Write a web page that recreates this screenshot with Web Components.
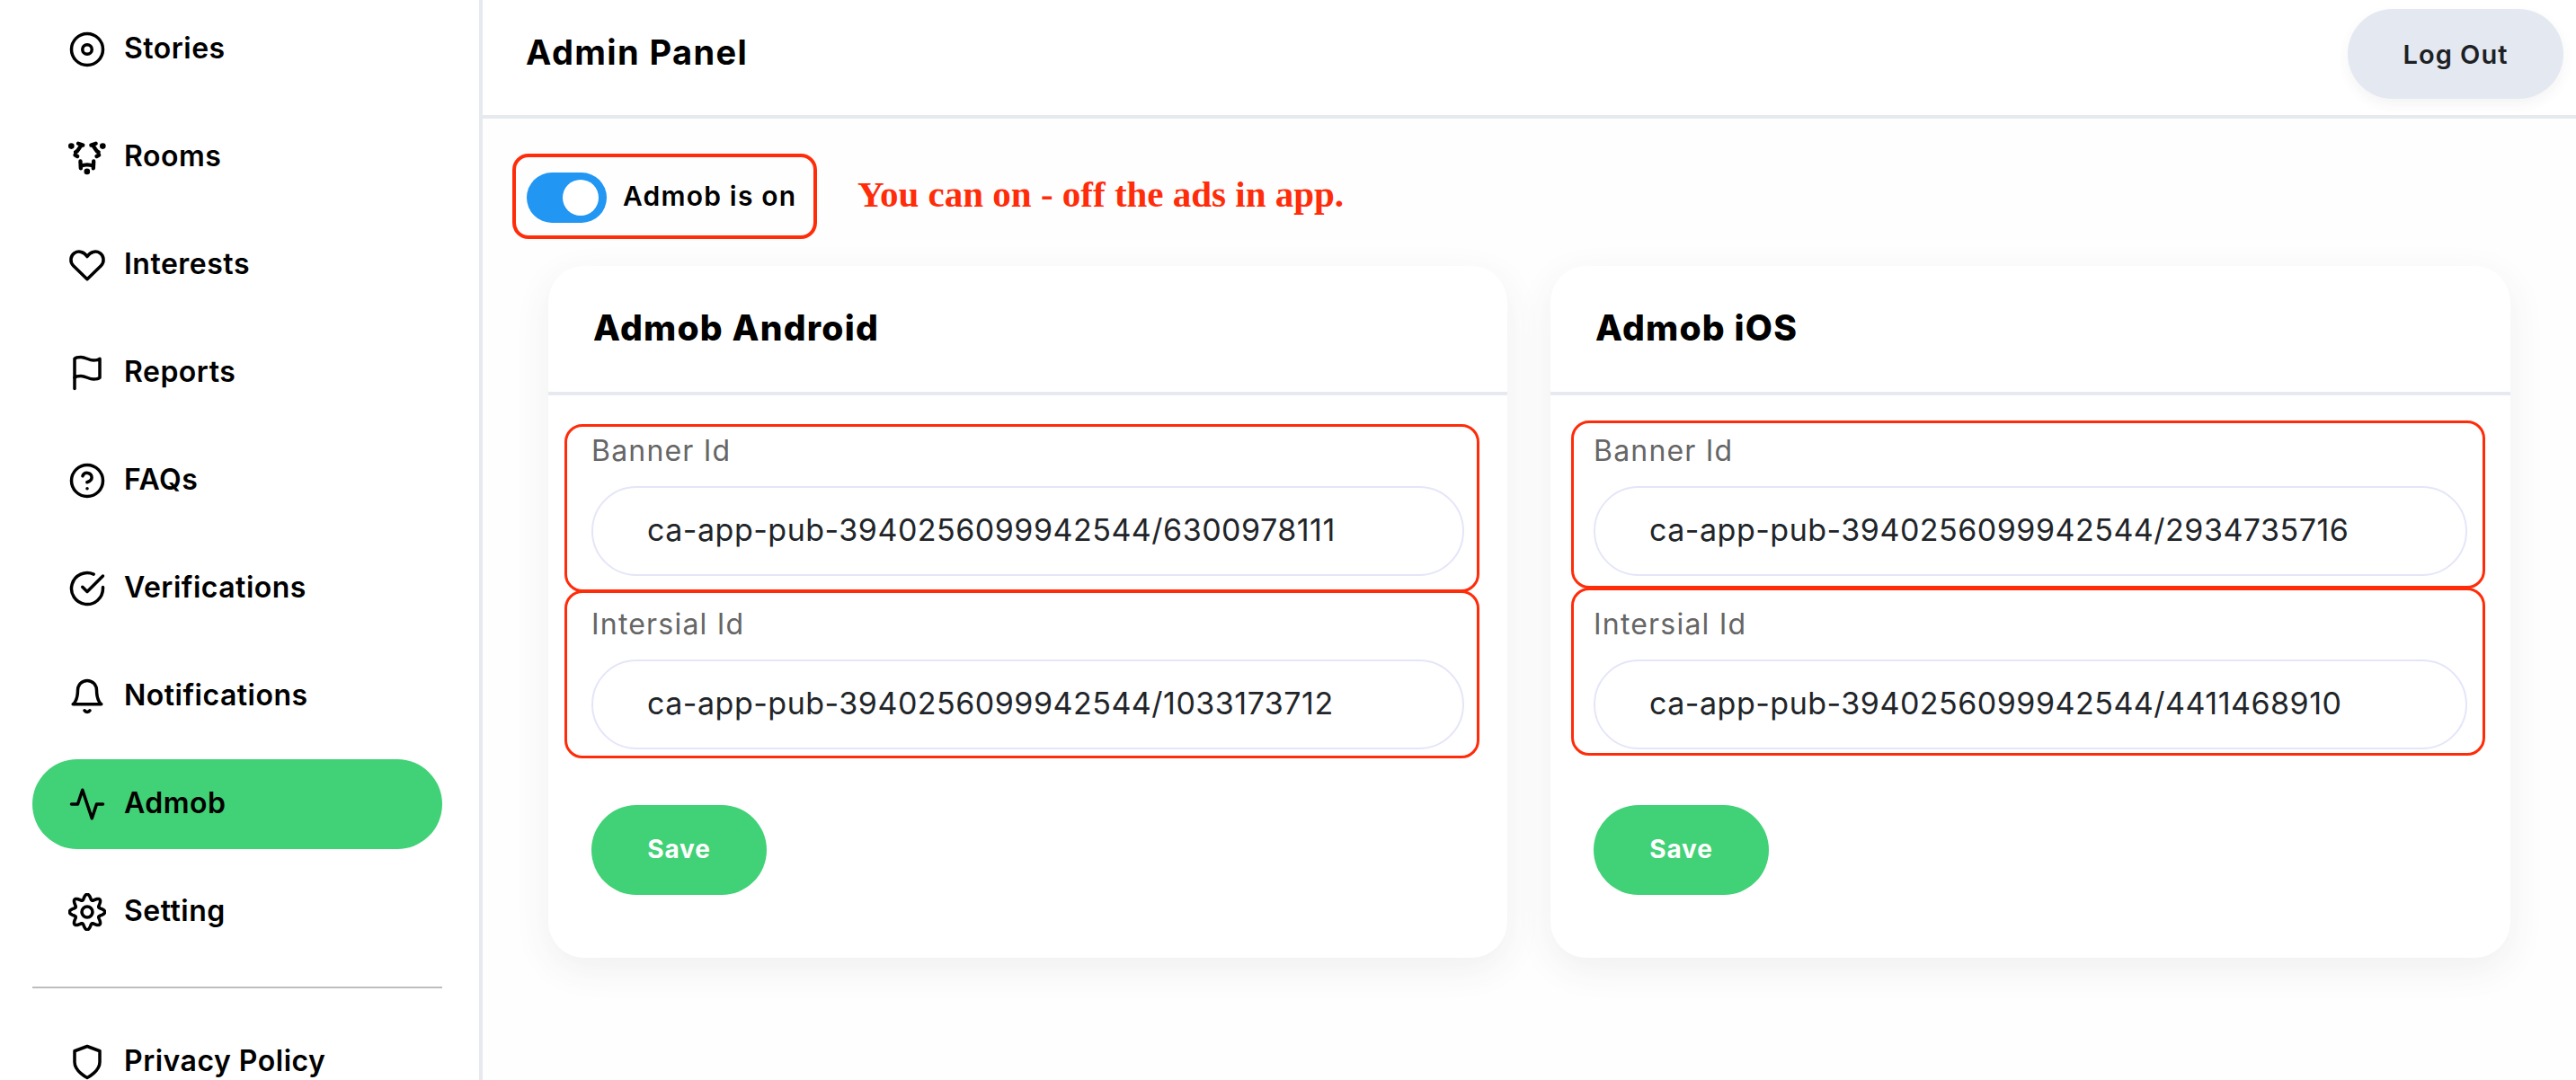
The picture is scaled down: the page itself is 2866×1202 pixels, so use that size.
<!DOCTYPE html>
<html lang="en">
<head>
<meta charset="utf-8">
<title>Admin Panel</title>
<style>
  html, body { margin: 0; height: 100%; overflow: hidden; background: #fefefe; }
  body { font-family: Inter, "Liberation Sans", sans-serif; color: #000; }
</style>
</head>
<body>
<template id="app-shell-tpl">
  <style>
    :host { display: grid; grid-template-columns: 533px 4px 1fr; height: 1202px; overflow: hidden; }
    .rule { background: #e6eaee; }
    .main { display: flex; flex-direction: column; min-width: 0; }
  </style>
  <slot name="sidebar"></slot>
  <div class="rule"></div>
  <div class="main"><slot></slot></div>
</template>

<template id="side-nav-tpl">
  <style>
    :host { display: flex; flex-direction: column; gap: 20px; padding: 5px 41px 0 36px; background: #fff; }
    ::slotted(hr) { border: 0; height: 2px; background: #bdbdbd; margin: 13px 0 12px; width: 100%; }
  </style>
  <slot></slot>
</template>

<template id="nav-item-tpl">
  <style>
    :host { display: flex; align-items: center; gap: 20px; height: 100px; flex: none; padding-left: 40px; border-radius: 50px; font-size: 32px; font-weight: 600; letter-spacing: .5px; color: #000; }
    :host([active]) { background: #41d176; }
    svg { width: 42px; height: 42px; flex: none; fill: none; stroke: #000; stroke-width: 2; stroke-linecap: round; stroke-linejoin: round; }
    svg .dot { fill: #000; stroke: none; }
    svg .thick { stroke-width: 2.5; }
    span { position: relative; top: -2px; }
  </style>
  <svg viewBox="0 0 24 24"></svg>
  <span><slot></slot></span>
</template>

<template id="top-bar-tpl">
  <style>
    :host { display: flex; align-items: flex-start; justify-content: space-between; box-sizing: border-box; height: 132px; flex: none; padding: 10px 14px 0 48px; border-bottom: 4px solid #e6eaee; background: #fff; }
    .title { font-size: 38px; font-weight: 700; letter-spacing: 1.4px; line-height: 96px; color: #000; }
    button { width: 240px; height: 100px; border: 0; border-radius: 50px; background: #e4e8f0; box-shadow: 0 6px 14px rgba(60,70,90,.06); color: #1d2125; font: 600 29px Inter, "Liberation Sans", sans-serif; letter-spacing: 1px; }
  </style>
  <div class="title"><slot></slot></div>
  <button>Log Out</button>
</template>

<template id="ad-toggle-tpl">
  <style>
    :host { display: flex; align-items: center; gap: 18px; height: 56px; position: relative; font-size: 30px; font-weight: 600; letter-spacing: 1.2px; color: #000; }
    .track { width: 89px; height: 56px; border-radius: 28px; background: #2196f3; position: relative; flex: none; }
    .knob { position: absolute; width: 40px; height: 40px; top: 8px; right: 9px; border-radius: 50%; background: #fff; }
    .label { position: relative; top: -2px; }
    .mark { position: absolute; left: -16px; top: -21px; width: 339px; height: 95px; box-sizing: border-box; border: 4px solid #ff2c0a; border-radius: 18px; }
    .note { position: absolute; left: 368px; top: -2px; white-space: nowrap; font: 700 41px/52px "Liberation Serif", serif; letter-spacing: 0; color: #ff2c0a; }
  </style>
  <div class="track"><div class="knob"></div></div>
  <span class="label"><slot></slot></span>
  <div class="mark"></div>
  <div class="note"><slot name="note"></slot></div>
</template>

<template id="ad-card-tpl">
  <style>
    :host { display: block; position: relative; height: 770px; box-sizing: border-box; background: #fff; border-radius: 40px; box-shadow: 0 12px 40px rgba(60,70,90,.08); }
    h2 { margin: 0; height: 136px; box-sizing: border-box; padding: 0 50px; display: flex; align-items: center; font-size: 39px; font-weight: 800; letter-spacing: 1.2px; }
    .rule { height: 4px; margin-top: 4px; background: #e6eaee; }
    .body { padding: 32px 48px 0; display: flex; flex-direction: column; }
    button { margin-top: 38px; width: 195px; height: 100px; border: 0; border-radius: 50px; padding: 0 0 2px; background: #41d176; color: #fff; font: 700 28px Inter, "Liberation Sans", sans-serif; letter-spacing: .8px; }
  </style>
  <h2><slot name="title"></slot></h2>
  <div class="rule"></div>
  <div class="body">
    <slot></slot>
    <div><button>Save</button></div>
  </div>
</template>

<template id="id-field-tpl">
  <style>
    :host { display: block; position: relative; height: 193px; }
    label { display: block; height: 69px; line-height: 60px; font-size: 32px; letter-spacing: 1.2px; color: #666; }
    .box { height: 100px; box-sizing: border-box; border: 2px solid #e4e6f8; border-radius: 50px; padding: 0 0 4px 60px; display: flex; align-items: center; font-size: 34px; letter-spacing: .5px; color: #212529; }
    .mark { position: absolute; left: var(--mark-left); right: var(--mark-right); top: var(--mark-top); bottom: var(--mark-bottom); border: 3px solid #ff2c0a; border-radius: 20px; }
  </style>
  <label><slot name="label"></slot></label>
  <div class="box"><slot></slot></div>
  <div class="mark"></div>
</template>

<app-shell>
  <side-nav slot="sidebar">
    <nav-item icon="disc">Stories</nav-item>
    <nav-item icon="rooms">Rooms</nav-item>
    <nav-item icon="heart">Interests</nav-item>
    <nav-item icon="flag">Reports</nav-item>
    <nav-item icon="help">FAQs</nav-item>
    <nav-item icon="check">Verifications</nav-item>
    <nav-item icon="bell">Notifications</nav-item>
    <nav-item icon="activity" active>Admob</nav-item>
    <nav-item icon="gear">Setting</nav-item>
    <hr>
    <nav-item icon="shield">Privacy Policy</nav-item>
  </side-nav>
  <top-bar>Admin Panel</top-bar>
  <page-body>
    <ad-toggle>Admob is on<span slot="note">You can on - off the ads in app.</span></ad-toggle>
    <card-grid>
      <ad-card style="--mark-left:-30px;--mark-right:-17px">
        <span slot="title">Admob Android</span>
        <id-field style="--mark-top:0px;--mark-bottom:6px"><span slot="label">Banner Id</span>ca-app-pub-3940256099942544/6300978111</id-field>
        <id-field style="--mark-top:-8px;--mark-bottom:14px"><span slot="label">Intersial Id</span>ca-app-pub-3940256099942544/1033173712</id-field>
      </ad-card>
      <ad-card style="--mark-left:-25px;--mark-right:-20px">
        <span slot="title">Admob iOS</span>
        <id-field style="--mark-top:-4px;--mark-bottom:10px"><span slot="label">Banner Id</span>ca-app-pub-3940256099942544/2934735716</id-field>
        <id-field style="--mark-top:-11px;--mark-bottom:17px"><span slot="label">Intersial Id</span>ca-app-pub-3940256099942544/4411468910</id-field>
      </ad-card>
    </card-grid>
  </page-body>
</app-shell>

<script>
  // eight rounded teeth, sampled around the centre of the 24 box
  function cogPath() {
    const points = [];
    for (let i = 0; i < 96; i++) {
      const angle = (i / 96) * Math.PI * 2;
      const wave = 0.5 + 0.5 * Math.cos(angle * 8);
      const radius = 7.9 + 3.4 * wave;
      points.push((12 + radius * Math.sin(angle)).toFixed(2) + " " + (12 - radius * Math.cos(angle)).toFixed(2));
    }
    return "M" + points.join("L") + "Z";
  }

  const ICONS = {
    disc: '<circle cx="12" cy="12" r="10"/><circle cx="12" cy="12" r="3"/>',
    rooms: '<circle class="dot" cx="1.9" cy="4.9" r="1.9"/><circle class="dot" cx="21.9" cy="4.9" r="1.9"/><circle class="dot" cx="11.9" cy="21.1" r="1.9"/>' +
      '<g class="thick"><path d="M6.300 3.300 9.300 4.300M8.300 4.600C6.500 6 6.800 8 4.600 8.800M4.300 10.600 5.800 11.400"/>' +
      '<path d="M17.500 3.300 14.500 4.300M15.500 4.600C17.300 6 17 8 19.200 8.800M19.500 10.600 18 11.400"/>' +
      '<path d="M7.700 14.600 7.900 19M16.100 14.600 15.900 19M8 17.600Q12 16 16 17.600"/></g>',
    heart: '<path d="M12 21 3.200 12.400C.8 10 1.400 6 3.800 4.400 6.600 2.600 10 3.600 12 6.600 14 3.600 17.400 2.600 20.200 4.400 22.600 6 23.200 10 20.800 12.400Z"/>',
    flag: '<path d="M4 15s1-1 4-1 5 2 8 2 4-1 4-1V3s-1 1-4 1-5-2-8-2-4 1-4 1z"/><path d="M4 22v-7"/>',
    help: '<circle cx="12" cy="12" r="10"/><path d="M9.100 9a3 3 0 0 1 5.800 1c0 2-3 3-3 3"/><path d="M12 17h.01"/>',
    check: '<path d="M22 11.100V12a10 10 0 1 1-5.900-9.100"/><path d="M22 4 12 14l-3-3"/>',
    bell: '<path d="M18 8A6 6 0 0 0 6 8c0 7-3 9-3 9h18s-3-2-3-9"/><path d="M13.700 21a2 2 0 0 1-3.400 0"/>',
    activity: '<path d="M22 12h-4l-3 9L9 3l-3 9H2"/>',
    gear: '<circle cx="12" cy="12" r="3.400"/><path d="' + cogPath() + '"/>',
    shield: '<path d="M12 22s8-4 8-10V5l-8-3-8 3v7c0 6 8 10 8 10z"/>'
  };

  class TemplateElement extends HTMLElement {
    constructor() {
      super();
      this.attachShadow({ mode: "open" });
      const tpl = document.getElementById(this.localName + "-tpl");
      if (tpl) this.shadowRoot.appendChild(tpl.content.cloneNode(true));
    }
  }

  class NavItem extends TemplateElement {
    connectedCallback() {
      this.shadowRoot.querySelector("svg").innerHTML = ICONS[this.getAttribute("icon")] || "";
    }
  }

  class PageBody extends HTMLElement {
    constructor() {
      super();
      this.attachShadow({ mode: "open" });
      this.shadowRoot.innerHTML = `
        <style>
          :host { display: flex; flex-direction: column; gap: 48px; padding: 60px 0 0 49px; }
        </style>
        <slot></slot>
      `;
    }
  }

  class CardGrid extends HTMLElement {
    constructor() {
      super();
      this.attachShadow({ mode: "open" });
      this.shadowRoot.innerHTML = `
        <style>
          :host { display: grid; grid-template-columns: 1067px 1068px; gap: 48px; margin-left: 24px; }
        </style>
        <slot></slot>
      `;
    }
  }

  customElements.define("app-shell", class extends TemplateElement {});
  customElements.define("side-nav", class extends TemplateElement {});
  customElements.define("nav-item", NavItem);
  customElements.define("top-bar", class extends TemplateElement {});
  customElements.define("ad-toggle", class extends TemplateElement {});
  customElements.define("ad-card", class extends TemplateElement {});
  customElements.define("id-field", class extends TemplateElement {});
  customElements.define("page-body", PageBody);
  customElements.define("card-grid", CardGrid);
</script>
</body>
</html>
